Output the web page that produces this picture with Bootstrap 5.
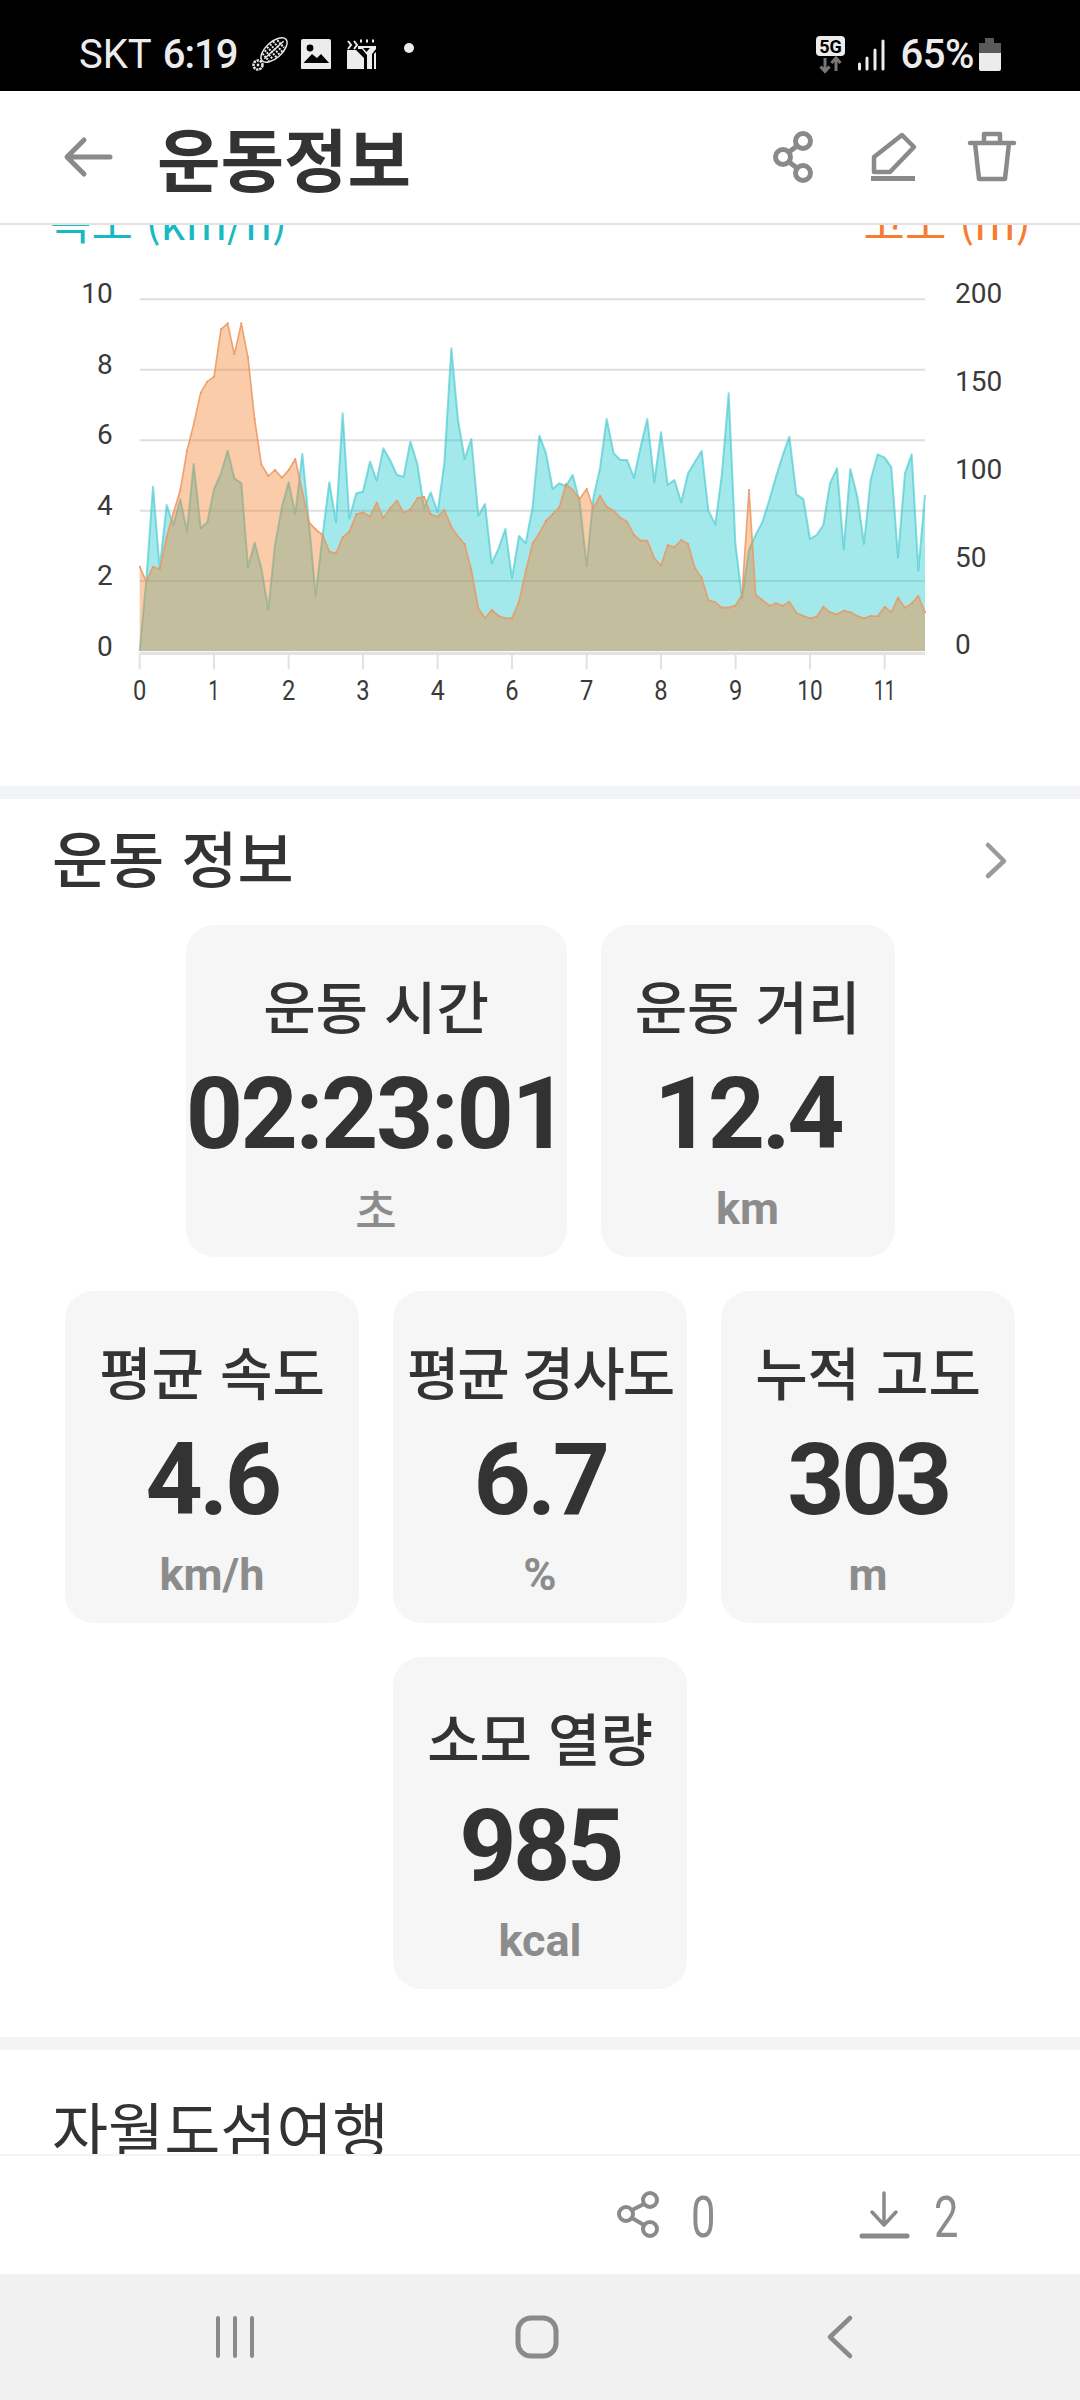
<!DOCTYPE html>
<html lang="ko">
<head>
<meta charset="utf-8">
<title>운동정보</title>
<link href="https://cdn.jsdelivr.net/npm/bootstrap@5.3.0/dist/css/bootstrap.min.css" rel="stylesheet">
<style>
  html, body { margin: 0; background: #fff; }
  body { font-family: Roboto, "Noto Sans CJK KR", sans-serif; color: #333; }
  svg { display: block; overflow: visible; flex: none; }
  .phone { width: 1080px; height: 2400px; }
  .status-strip { height: 91px; background: #000; color: #ececec; padding: 27px 0 0 79px; font-size: 40px; line-height: 46px; }
  .status-strip span { margin-top: 5px; }
  .status-strip .clock { font-weight: 500; letter-spacing: -1px; margin-left: 11px; }
  .status-strip .pct { font-weight: 500; letter-spacing: -.5px; margin-left: 15px; }
  .app-head { height: 134px; border-bottom: 2px solid #e2e2e2; padding: 0 64px 0 65px; background: #fff; }
  .app-title { font-family: "Noto Sans CJK KR", sans-serif; font-weight: 700; font-size: 69px; line-height: 80px; margin: 0 0 0 45px; color: #333; }
  .ico-ln { fill: none; stroke: #8a8a8a; stroke-linecap: round; stroke-linejoin: round; }
  .scroll-pane { min-height: 0; }
  .legend-row { margin-top: -31px; height: 27px; padding: 0 49px 0 50px; font-family: "Noto Sans CJK KR", Roboto, sans-serif; font-size: 45px; line-height: 54px; }
  .legend-speed { color: #17b9c2; }
  .legend-alt { color: #f57c30; }
  .chart-wrap { height: 565px; }
  .chart-wrap text { font-family: Roboto, sans-serif; font-size: 84px; fill: #3a3a3a; }
  .band { height: 13px; background: #f1f3f5; }
  .sect-head { padding: 26px 74px 0 52px; height: 94px; }
  .sect-title { font-family: "Noto Sans CJK KR", sans-serif; font-weight: 500; font-size: 61px; line-height: 64px; margin: 0; color: #333; }
  .tile-grid { padding: 32px 65px 48px; column-gap: 34px; row-gap: 34px; }
  .tile { width: 294px; height: 332px; background: #f6f6f6; border-radius: 28px; padding-top: 47px; }
  .tile-wide { width: 381px; }
  .tile-label { font-family: "Noto Sans CJK KR", sans-serif; font-weight: 500; font-size: 57px; line-height: 64px; white-space: nowrap; color: #333; }
  .tile-label-tight { letter-spacing: -2px; }
  .tile-value { font-family: Roboto, sans-serif; font-weight: 700; font-size: 100px; line-height: 116px; letter-spacing: -3.500px; margin-top: 20px; color: #333; white-space: nowrap; }
  .tile-clock { letter-spacing: -2.500px; }
  .tile-unit { font-family: Roboto, "Noto Sans CJK KR", sans-serif; font-weight: 700; font-size: 45px; line-height: 50px; margin-top: 12px; color: #8c8c8c; }
  .tile-unit-ko { font-family: "Noto Sans CJK KR", sans-serif; font-weight: 500; }
  .trip-title { font-family: "Noto Sans CJK KR", sans-serif; font-size: 61px; line-height: 70px; padding: 43px 0 0 52px; margin: 0; font-weight: 400; color: #333; }
  .foot-bar { height: 120px; border-top: 2px solid #f3f3f3; background: #fff; font-family: Roboto, sans-serif; font-size: 58px; color: #8c8c8c; padding-right: 118px; }
  .foot-num { display: inline-block; width: 32px; line-height: 60px; transform: scaleX(.75); margin-top: 3px; }
  .sys-nav { height: 126px; background: #f1f1f1; }
</style>
</head>
<body>
<div class="phone d-flex flex-column overflow-hidden">

  <!-- system status line -->
  <div class="status-strip d-flex align-items-start flex-shrink-0">
    <span>SKT</span><span class="clock">6:19</span>
    <svg width="36" height="36" viewBox="252 36 36 36" style="margin:9px 0 0 15px">
      <g transform="rotate(-42 274 50)" fill="none" stroke="#e8e8e8">
        <ellipse cx="274" cy="50" rx="16" ry="8" stroke-width="1.5"/>
        <path d="M261 50h26" stroke-width="1.5"/>
        <path d="M263 45v10M267 44v12M271 43v14M275 43v14M279 43v14M283 45v10" stroke-width="2" stroke-dasharray="2 1"/>
      </g>
      <circle cx="258" cy="65" r="4.500" fill="none" stroke="#e8e8e8" stroke-width="2.500" stroke-dasharray="2.400 .8"/>
      <circle cx="258" cy="65" r="1.400" fill="#e8e8e8"/>
    </svg>
    <svg width="30" height="30" viewBox="301 39 30 30" style="margin:12px 0 0 13px">
      <rect x="301" y="39" width="30" height="30" rx="2" fill="#ececec"/>
      <circle cx="310" cy="48" r="3.400" fill="#000"/>
      <path d="M302.500 64L312 54l5 4 4-4 9 10z" fill="#000"/>
      <rect x="301" y="63" width="30" height="6" rx="1" fill="#ececec"/>
    </svg>
    <svg width="30" height="30" viewBox="348 39 30 30" style="margin:12px 0 0 16px">
      <path d="M349 41l3 4-3 4M355 41l3 4-3 4" fill="none" stroke="#ececec" stroke-width="2"/>
      <path d="M361 41h2M367 41h2M373 41h2" stroke="#ececec" stroke-width="3"/>
      <path d="M359 46h18v3l-4 5v15h-5V55l-5-6h-4zM348 50h9l8 8v11h-17zM377 52v17h-2V54z" fill="#ececec"/>
      <path d="M364 48h7l-3.500 4z" fill="#000"/>
    </svg>
    <svg width="12" height="12" viewBox="403 48 12 12" style="margin:15px 0 0 26px"><circle cx="409" cy="54" r="5" fill="#ececec"/></svg>
    <svg class="ms-auto" width="30" height="38" viewBox="819 35 30 38" style="margin-top:8px">
      <rect x="819" y="36" width="29" height="20" rx="4" fill="#ececec"/>
      <text x="833.500" y="52.500" text-anchor="middle" font-family="Roboto, sans-serif" font-weight="700" font-size="18" fill="#000">5G</text>
      <path d="M828 58v13M823.500 66.500l4.500 5 4.500-5M839 71V58M834.500 63l4.500-5 4.500 5" fill="none" stroke="#777" stroke-width="3"/>
    </svg>
    <svg width="28" height="32" viewBox="860 39 28 32" style="margin:12px 0 0 12px">
      <path d="M861.500 64v5M869 58v11M877 50v19M885 41v28" stroke="#ececec" stroke-width="3" stroke-linecap="round"/>
    </svg>
    <span class="pct">65%</span>
    <svg width="22" height="34" viewBox="979 38 22 34" style="margin:11px 79px 0 5px">
      <path d="M985 38h9v5h7v11h-22V43h6z" fill="#5a5a5a"/>
      <path d="M979 53h22v16a2 2 0 0 1-2 2h-18a2 2 0 0 1-2-2z" fill="#ececec"/>
    </svg>
  </div>

  <!-- screen header -->
  <header class="app-head d-flex align-items-center flex-shrink-0">
    <svg width="47" height="38" viewBox="65 137 47 38" role="img" aria-label="뒤로">
      <path class="ico-ln" stroke-width="5" d="M110 156H68M84 139l-17 17 17 17"/>
    </svg>
    <h1 class="app-title">운동정보</h1>
    <svg class="ms-auto" width="42" height="52" viewBox="772 131 42 52" role="img" aria-label="공유">
      <g class="ico-ln" stroke-width="5">
        <circle cx="803" cy="141" r="7.500"/><circle cx="783" cy="157" r="7.500"/><circle cx="803" cy="173" r="7.500"/>
        <path d="M797 146l-8 6M789 162l8 6"/>
      </g>
    </svg>
    <svg width="46" height="50" viewBox="870 132 46 50" style="margin-left:56px" role="img" aria-label="수정">
      <path class="ico-ln" stroke-width="4.500" d="M902 135l12 12-24 25h-16v-15z"/>
      <path d="M871 178.500h44" stroke="#8a8a8a" stroke-width="5"/>
    </svg>
    <svg width="48" height="52" viewBox="969 132 48 52" style="margin-left:52px" role="img" aria-label="삭제">
      <path class="ico-ln" stroke-width="4.500" d="M971 144h44M976 144l4 36h26l4-36M985 143v-8h16v8"/>
    </svg>
  </header>

  <!-- scrolled content, clipped by the header and the footer -->
  <main class="scroll-pane flex-grow-1 overflow-hidden">
    <div class="legend-row d-flex justify-content-between">
      <span class="legend-speed">속도 (km/h)</span>
      <span class="legend-alt">고도 (m)</span>
    </div>

    <div class="chart-wrap">
      <svg width="1080" height="565" viewBox="-120 -117 3240 1695" role="img" aria-label="속도와 고도 그래프">
        <defs>
          <marker id="altDot" viewBox="-3 -3 6 6" markerWidth="6" markerHeight="6" markerUnits="userSpaceOnUse">
            <circle r="3" fill="#ec9763"/>
          </marker>
        </defs>
        <path d="M299 118H2655M299 329H2655M299 541H2655M299 752H2655M299 963H2655" stroke="#dfdfdf" stroke-width="6" fill="none"/>
        <path d="M299 1180H2655" stroke="#e2e2e2" stroke-width="10"/>
        <path d="M299 1180v48M522 1180v48M746 1180v48M969 1180v48M1193 1180v48M1416 1180v48M1640 1180v48M1863 1180v48M2087 1180v48M2310 1180v48M2534 1180v48" stroke="#e2e2e2" stroke-width="6"/>

        <polygon fill="#19c8cd" fill-opacity=".4" points="299,1173 319,960 339,680 359,925 380,735 400,795 421,718 441,815 461,612 482,805 502,787 522,688 543,640 563,572 583,655 604,670 624,922 644,848 664,925 685,1048 705,855 726,740 746,667 766,762 787,582 807,790 827,1008 848,825 868,667 888,787 908,460 928,775 949,700 969,695 990,605 1010,662 1030,565 1050,600 1071,645 1091,650 1111,545 1132,612 1152,745 1172,697 1193,757 1213,610 1234,265 1254,480 1274,597 1294,537 1315,767 1335,732 1355,910 1376,865 1396,807 1416,955 1437,828 1457,850 1478,740 1498,527 1518,580 1538,687 1558,670 1578,678 1598,645 1619,725 1640,918 1660,715 1680,625 1700,477 1721,580 1741,600 1761,600 1782,653 1802,560 1822,477 1843,667 1863,517 1883,675 1903,660 1924,727 1944,640 1965,605 1985,573 2005,752 2026,793 2046,640 2066,400 2086,850 2106,1015 2127,870 2147,825 2167,787 2188,720 2208,650 2228,587 2248,530 2269,703 2290,717 2310,837 2330,825 2350,795 2370,670 2391,625 2411,868 2431,627 2452,710 2472,852 2492,660 2513,583 2534,593 2554,622 2574,892 2595,640 2615,583 2635,932 2655,705 2655,1173"/>
        <polyline fill="none" stroke="#45c9cf" stroke-opacity=".65" stroke-width="6" stroke-linejoin="round" points="299,1173 319,960 339,680 359,925 380,735 400,795 421,718 441,815 461,612 482,805 502,787 522,688 543,640 563,572 583,655 604,670 624,922 644,848 664,925 685,1048 705,855 726,740 746,667 766,762 787,582 807,790 827,1008 848,825 868,667 888,787 908,460 928,775 949,700 969,695 990,605 1010,662 1030,565 1050,600 1071,645 1091,650 1111,545 1132,612 1152,745 1172,697 1193,757 1213,610 1234,265 1254,480 1274,597 1294,537 1315,767 1335,732 1355,910 1376,865 1396,807 1416,955 1437,828 1457,850 1478,740 1498,527 1518,580 1538,687 1558,670 1578,678 1598,645 1619,725 1640,918 1660,715 1680,625 1700,477 1721,580 1741,600 1761,600 1782,653 1802,560 1822,477 1843,667 1863,517 1883,675 1903,660 1924,727 1944,640 1965,605 1985,573 2005,752 2026,793 2046,640 2066,400 2086,850 2106,1015 2127,870 2147,825 2167,787 2188,720 2208,650 2228,587 2248,530 2269,703 2290,717 2310,837 2330,825 2350,795 2370,670 2391,625 2411,868 2431,627 2452,710 2472,852 2492,660 2513,583 2534,593 2554,622 2574,892 2595,640 2615,583 2635,932 2655,705"/>

        <polygon fill="#f3802a" fill-opacity=".4" points="299,1173 299,920 319,965 339,920 359,928 380,830 400,760 421,690 441,572 461,493 482,398 502,365 522,350 543,208 563,190 583,283 604,190 624,292 644,478 664,613 685,648 705,630 726,653 746,630 766,597 787,695 807,787 827,808 848,825 868,875 888,880 908,832 928,815 949,763 969,757 990,770 1010,728 1030,775 1050,745 1071,722 1091,758 1111,748 1132,715 1152,710 1172,763 1193,770 1213,750 1234,800 1254,830 1274,852 1294,930 1315,1045 1335,1075 1355,1050 1376,1068 1396,1075 1416,1075 1437,1025 1457,935 1478,850 1498,820 1518,782 1538,762 1558,742 1578,672 1598,690 1619,716 1640,687 1660,745 1680,708 1700,740 1721,752 1741,773 1761,785 1782,825 1802,842 1822,842 1843,895 1863,917 1883,855 1903,862 1924,840 1944,852 1965,925 1985,953 2005,1020 2026,1027 2046,1043 2066,1043 2086,1037 2106,1005 2127,690 2147,1005 2167,1020 2188,1037 2208,1030 2228,1037 2248,1025 2269,1058 2290,1068 2310,1075 2330,1070 2350,1040 2370,1057 2391,1063 2411,1052 2431,1057 2452,1068 2472,1075 2492,1068 2513,1069 2534,1040 2554,1057 2574,1013 2595,1043 2615,1030 2635,1008 2655,1057 2655,1173"/>
        <polyline fill="none" stroke="#ec9763" stroke-opacity=".85" stroke-width="5" stroke-linejoin="round" marker-start="url(#altDot)" marker-mid="url(#altDot)" marker-end="url(#altDot)" points="299,920 319,965 339,920 359,928 380,830 400,760 421,690 441,572 461,493 482,398 502,365 522,350 543,208 563,190 583,283 604,190 624,292 644,478 664,613 685,648 705,630 726,653 746,630 766,597 787,695 807,787 827,808 848,825 868,875 888,880 908,832 928,815 949,763 969,757 990,770 1010,728 1030,775 1050,745 1071,722 1091,758 1111,748 1132,715 1152,710 1172,763 1193,770 1213,750 1234,800 1254,830 1274,852 1294,930 1315,1045 1335,1075 1355,1050 1376,1068 1396,1075 1416,1075 1437,1025 1457,935 1478,850 1498,820 1518,782 1538,762 1558,742 1578,672 1598,690 1619,716 1640,687 1660,745 1680,708 1700,740 1721,752 1741,773 1761,785 1782,825 1802,842 1822,842 1843,895 1863,917 1883,855 1903,862 1924,840 1944,852 1965,925 1985,953 2005,1020 2026,1027 2046,1043 2066,1043 2086,1037 2106,1005 2127,690 2147,1005 2167,1020 2188,1037 2208,1030 2228,1037 2248,1025 2269,1058 2290,1068 2310,1075 2330,1070 2350,1040 2370,1057 2391,1063 2411,1052 2431,1057 2452,1068 2472,1075 2492,1068 2513,1069 2534,1040 2554,1057 2574,1013 2595,1043 2615,1030 2635,1008 2655,1057"/>

        <g text-anchor="end">
          <text x="218" y="130">10</text><text x="218" y="341">8</text><text x="218" y="551">6</text>
          <text x="218" y="765">4</text><text x="218" y="975">2</text><text x="218" y="1187">0</text>
        </g>
        <g>
          <text x="2745" y="128">200</text><text x="2745" y="392">150</text><text x="2745" y="657">100</text>
          <text x="2745" y="920">50</text><text x="2745" y="1183">0</text>
        </g>
        <g text-anchor="middle">
          <text x="299" y="1320" textLength="40" lengthAdjust="spacingAndGlyphs">0</text>
          <text x="522" y="1320" textLength="34" lengthAdjust="spacingAndGlyphs">1</text>
          <text x="746" y="1320" textLength="40" lengthAdjust="spacingAndGlyphs">2</text>
          <text x="969" y="1320" textLength="40" lengthAdjust="spacingAndGlyphs">3</text>
          <text x="1193" y="1320" textLength="42" lengthAdjust="spacingAndGlyphs">4</text>
          <text x="1416" y="1320" textLength="40" lengthAdjust="spacingAndGlyphs">6</text>
          <text x="1640" y="1320" textLength="40" lengthAdjust="spacingAndGlyphs">7</text>
          <text x="1863" y="1320" textLength="40" lengthAdjust="spacingAndGlyphs">8</text>
          <text x="2087" y="1320" textLength="40" lengthAdjust="spacingAndGlyphs">9</text>
          <text x="2310" y="1320" textLength="76" lengthAdjust="spacingAndGlyphs">10</text>
          <text x="2534" y="1320" textLength="64" lengthAdjust="spacingAndGlyphs">11</text>
        </g>
      </svg>
    </div>

    <div class="band"></div>

    <section>
      <div class="sect-head d-flex justify-content-between align-items-start">
        <h2 class="sect-title">운동 정보</h2>
        <svg width="20" height="34" viewBox="985 842 20 34" style="margin-top:18px">
          <path d="M987 844l16 16-16 15" fill="none" stroke="#9a9a9a" stroke-width="4.500" stroke-linecap="round" stroke-linejoin="round"/>
        </svg>
      </div>
      <div class="tile-grid d-flex flex-wrap justify-content-center">
        <div class="tile tile-wide text-center">
          <div class="tile-label">운동 시간</div><div class="tile-value tile-clock">02:23:01</div><div class="tile-unit tile-unit-ko">초</div>
        </div>
        <div class="tile text-center">
          <div class="tile-label">운동 거리</div><div class="tile-value">12.4</div><div class="tile-unit">km</div>
        </div>
        <div class="tile text-center">
          <div class="tile-label">평균 속도</div><div class="tile-value">4.6</div><div class="tile-unit">km/h</div>
        </div>
        <div class="tile text-center">
          <div class="tile-label tile-label-tight">평균 경사도</div><div class="tile-value">6.7</div><div class="tile-unit">%</div>
        </div>
        <div class="tile text-center">
          <div class="tile-label">누적 고도</div><div class="tile-value">303</div><div class="tile-unit">m</div>
        </div>
        <div class="tile text-center">
          <div class="tile-label">소모 열량</div><div class="tile-value">985</div><div class="tile-unit">kcal</div>
        </div>
      </div>
    </section>

    <div class="band"></div>

    <h2 class="trip-title">자월도섬여행</h2>
  </main>

  <!-- share and download counters -->
  <footer class="foot-bar d-flex align-items-center justify-content-end flex-shrink-0">
    <svg width="42" height="48" viewBox="617 2192 42 48" role="img" aria-label="공유 수">
      <g fill="none" stroke="#8a8a8a" stroke-width="4">
        <circle cx="650" cy="2201" r="7"/><circle cx="626" cy="2215" r="7"/><circle cx="650" cy="2230" r="7"/>
        <path d="M644 2205l-12 6M632 2219l12 7"/>
      </g>
    </svg>
    <span class="foot-num" style="margin-left:28px">0</span>
    <svg width="48" height="48" viewBox="860 2192 48 48" style="margin-left:141px" role="img" aria-label="다운로드 수">
      <path d="M884 2194v31M872 2213l12 13 12-13" fill="none" stroke="#8a8a8a" stroke-width="3.500" stroke-linecap="round" stroke-linejoin="round"/>
      <path d="M862 2237h45" stroke="#8a8a8a" stroke-width="5" stroke-linecap="round"/>
    </svg>
    <span class="foot-num" style="margin-left:22px">2</span>
  </footer>

  <!-- system navigation keys -->
  <nav class="sys-nav d-flex align-items-center flex-shrink-0">
    <svg width="38" height="42" viewBox="216 2316 38 42" style="margin-left:216px" role="img" aria-label="최근 앱">
      <path d="M218 2318v38M235 2318v38M252 2318v38" stroke="#8a8a8a" stroke-width="4" stroke-linecap="round"/>
    </svg>
    <svg width="44" height="44" viewBox="515 2315 44 44" style="margin-left:261px" role="img" aria-label="홈">
      <rect x="518" y="2318" width="38" height="38" rx="13" fill="none" stroke="#8a8a8a" stroke-width="5"/>
    </svg>
    <svg width="26" height="42" viewBox="827 2316 26 42" style="margin-left:268px" role="img" aria-label="뒤로">
      <path d="M850 2318l-20 19 20 19" fill="none" stroke="#8a8a8a" stroke-width="4.500" stroke-linecap="round" stroke-linejoin="round"/>
    </svg>
  </nav>
</div>
<script src="https://cdn.jsdelivr.net/npm/bootstrap@5.3.0/dist/js/bootstrap.bundle.min.js"></script>
</body>
</html>
